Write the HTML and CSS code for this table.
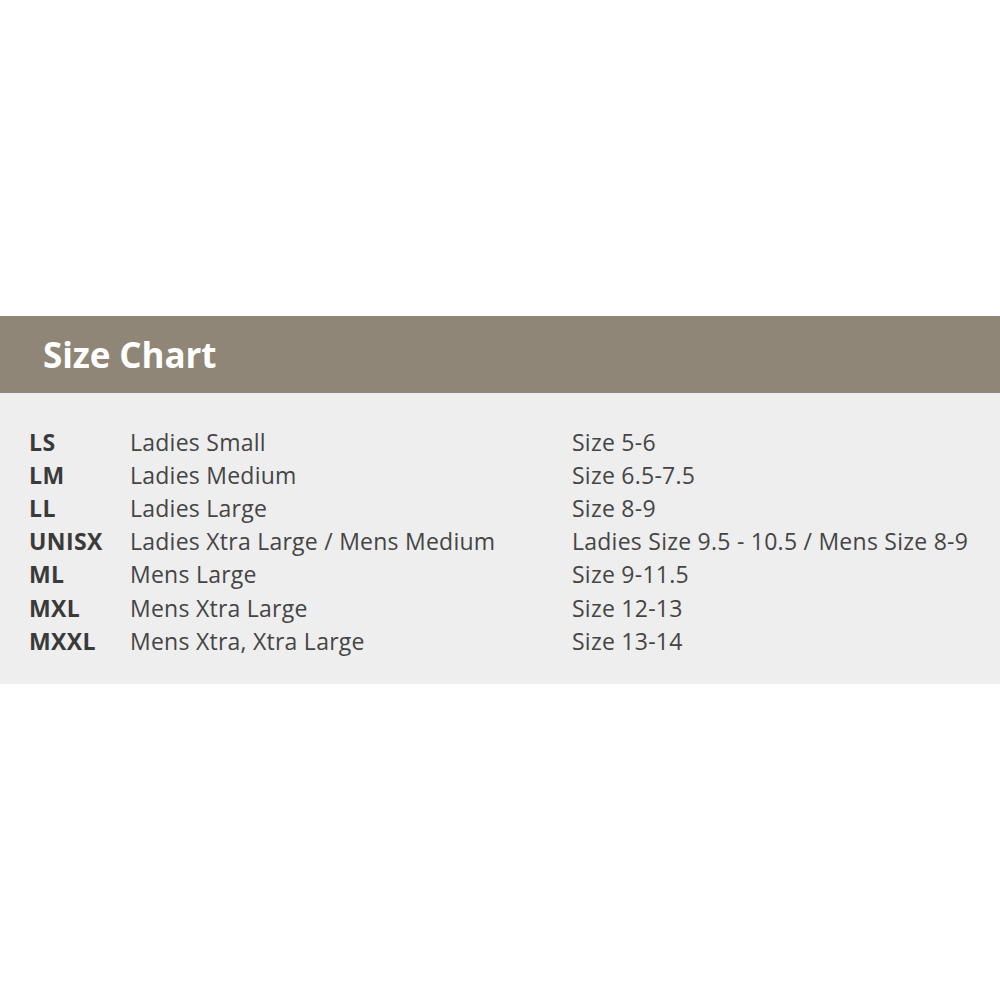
FILE: index.html
```html
<!DOCTYPE html>
<html>
<head>
<meta charset="utf-8">
<link rel="stylesheet" href="styles.css">
</head>
<body>
<div class="page">
  <section class="chart">
    <header class="chart-head"><h1 class="chart-title">Size Chart</h1></header>
    <div class="chart-body">
      <div class="grid">
        <div class="code">LS</div><div class="desc">Ladies Small</div><div class="size">Size 5-6</div>
        <div class="code">LM</div><div class="desc">Ladies Medium</div><div class="size">Size 6.5-7.5</div>
        <div class="code">LL</div><div class="desc">Ladies Large</div><div class="size">Size 8-9</div>
        <div class="code">UNISX</div><div class="desc">Ladies Xtra Large / Mens Medium</div><div class="size">Ladies Size 9.5 - 10.5 / Mens Size 8-9</div>
        <div class="code">ML</div><div class="desc">Mens Large</div><div class="size">Size 9-11.5</div>
        <div class="code">MXL</div><div class="desc">Mens Xtra Large</div><div class="size">Size 12-13</div>
        <div class="code">MXXL</div><div class="desc">Mens Xtra, Xtra Large</div><div class="size">Size 13-14</div>
      </div>
    </div>
  </section>
</div>
</body>
</html>
```
FILE: styles.css
```css
html, body {
  margin: 0;
  padding: 0;
  background: #ffffff;
}
body {
  font-family: "Open Sans", "Noto Sans", "Liberation Sans", sans-serif;
  color: #444444;
}
.page {
  padding-top: 316px;
}
.chart-head {
  background: #8f8677;
  height: 77px;
  display: flex;
  align-items: center;
  padding-left: 43px;
}
.chart-title {
  margin: 0;
  font-size: 35px;
  font-weight: 700;
  color: #ffffff;
  letter-spacing: -0.1px;
}
.chart-body {
  background: #eeeeee;
  height: 291px;
  box-sizing: border-box;
  padding: 32px 0 0 29px;
}
.grid {
  display: grid;
  grid-template-columns: 101px 442px 1fr;
  grid-auto-rows: 33.2px;
  align-items: center;
  font-size: 23px;
  letter-spacing: 0.25px;
}
.code {
  font-weight: 700;
  color: #3a3a3a;
  letter-spacing: 0.4px;
}
.desc, .size {
  color: #454545;
}
```
